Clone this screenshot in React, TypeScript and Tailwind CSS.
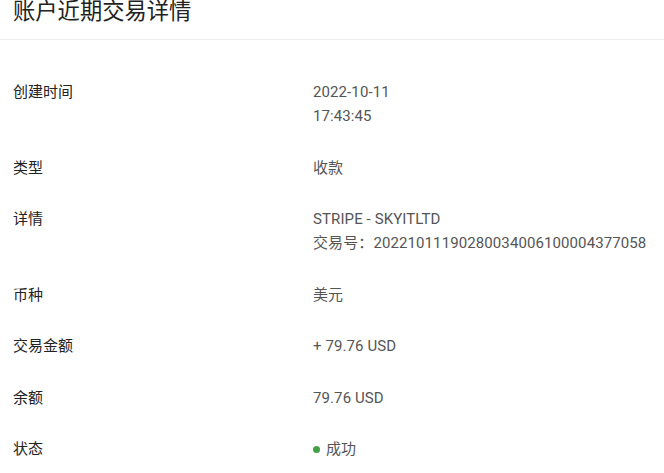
const rows: { label: string; lines: React.ReactNode[] }[] = [
  { label: "创建时间", lines: ["2022-10-11", "17:43:45"] },
  { label: "类型", lines: ["收款"] },
  {
    label: "详情",
    lines: ["STRIPE - SKYITLTD", "交易号：20221011190280034006100004377058"],
  },
  { label: "币种", lines: ["美元"] },
  { label: "交易金额", lines: ["+ 79.76 USD"] },
  { label: "余额", lines: ["79.76 USD"] },
  {
    label: "状态",
    lines: [
      <span className="flex items-center gap-[6px]">
        <span className="inline-block h-[7px] w-[7px] rounded-full bg-[#43a047]" />
        成功
      </span>,
    ],
  },
];

export default function App() {
  return (
    <div
      className="min-h-[473px] w-full bg-white"
      style={{ fontFamily: 'Roboto, "Noto Sans CJK SC", sans-serif' }}
    >
      <div className="h-10 border-b border-[#ededed] px-[13px]">
        <h1 className="text-[22.3px] leading-[23px] text-[#222]">账户近期交易详情</h1>
      </div>
      <div className="flex flex-col gap-[27.5px] px-[13px] pt-10">
        {rows.map((row) => (
          <div key={row.label} className="grid grid-cols-[300px_1fr] text-[15px] leading-6">
            <div className="text-[#222]">{row.label}</div>
            <div className="tracking-[0.1px] text-[#555]">
              {row.lines.map((line, i) => (
                <div key={i}>{line}</div>
              ))}
            </div>
          </div>
        ))}
      </div>
    </div>
  );
}
